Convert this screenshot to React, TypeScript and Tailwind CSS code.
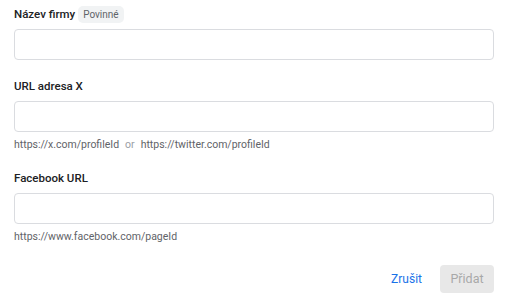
import { useState } from 'react'

interface FieldProps {
  label: string
  required?: boolean
  value: string
  onChange: (v: string) => void
  hint?: React.ReactNode
}

function Field({ label, required, value, onChange, hint }: FieldProps) {
  return (
    <div className="flex flex-col">
      <div className="flex items-center gap-[3px] h-4 mb-[7px]">
        <span className="text-[11.5px] leading-4 font-medium text-[#202124]">{label}</span>
        {required && (
          <span className="text-[10px] leading-[17px] px-[5px] rounded-[5px] bg-[#f1f3f4] text-[#5f6368]">
            Povinné
          </span>
        )}
      </div>
      <input
        type="text"
        value={value}
        onChange={(e) => onChange(e.target.value)}
        className="h-[31px] w-full px-3 text-[13px] border border-[#dadce0] rounded-[4px] outline-none focus:border-[#1a73e8]"
      />
      {hint && (
        <div className="mt-[5px] text-[10.5px] leading-4 text-[#5f6368]">{hint}</div>
      )}
    </div>
  )
}

export default function App() {
  const [name, setName] = useState('')
  const [xUrl, setXUrl] = useState('')
  const [fbUrl, setFbUrl] = useState('')

  return (
    <div className="w-[516px] h-[303px] bg-white pl-[14px] pr-[22px] pt-[6px] font-['Roboto',sans-serif]">
      <div className="flex flex-col">
        <Field label="Název firmy" required value={name} onChange={setName} />

        <div className="mt-[18px]">
          <Field
            label="URL adresa X"
            value={xUrl}
            onChange={setXUrl}
            hint={
              <>
                https://x.com/profileId
                <span className="mx-[6px] text-[#9aa0a6]">or</span>
                https://twitter.com/profileId
              </>
            }
          />
        </div>

        {/* Facebook */}
        <div className="mt-[17px]">
          <Field
            label="Facebook URL"
            value={fbUrl}
            onChange={setFbUrl}
            hint="https://www.facebook.com/pageId"
          />
        </div>

        <div className="flex justify-end items-center gap-[12px] mt-[20px]">
          <button className="h-7 px-[6px] text-[12px] text-[#1a73e8] rounded-[4px] hover:bg-[#f1f3f4]">
            Zrušit
          </button>
          <button
            disabled
            className="h-7 w-[54px] text-[12.5px] rounded-[4px] bg-[#e8e8e8] text-[#a8a8a8]"
          >
            Přidat
          </button>
        </div>
      </div>
    </div>
  )
}
